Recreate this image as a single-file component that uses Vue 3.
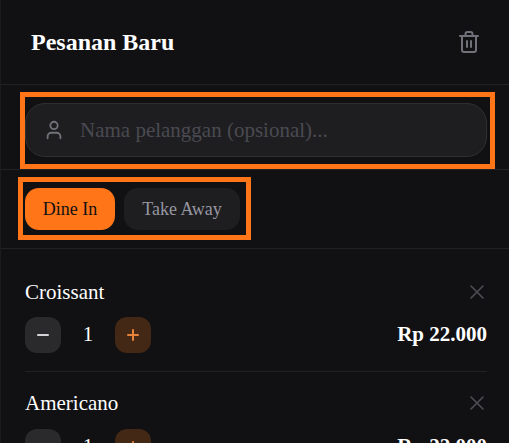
<script setup>
const items = [
  { name: 'Croissant', qty: 1, price: 'Rp 22.000' },
  { name: 'Americano', qty: 1, price: 'Rp 22.000' },
]
</script>

<template>
  <div class="panel">
    <header class="head">
      <h1 class="title">Pesanan Baru</h1>
      <button class="trash" aria-label="Hapus">
        <svg width="24" height="24" viewBox="0 0 24 24" fill="none" stroke="currentColor" stroke-width="2" stroke-linecap="round" stroke-linejoin="round">
          <path d="M3 6h18" />
          <path d="M8.5 6V4a2 2 0 0 1 2-2h3a2 2 0 0 1 2 2v2" />
          <path d="M19 6v14a2 2 0 0 1-2 2H7a2 2 0 0 1-2-2V6" />
          <path d="M10 11v6" />
          <path d="M14 11v6" />
        </svg>
      </button>
    </header>

    <section class="customer">
      <div class="mark mark-input">
        <div class="field">
          <svg class="user" width="22" height="22" viewBox="0 0 24 24" fill="none" stroke="currentColor" stroke-width="2" stroke-linecap="round" stroke-linejoin="round">
            <circle cx="12" cy="7" r="4" />
            <path d="M5 21v-2a4 4 0 0 1 4-4h6a4 4 0 0 1 4 4v2" />
          </svg>
          <span class="placeholder">Nama pelanggan (opsional)...</span>
        </div>
      </div>
    </section>

    <section class="mode">
      <div class="mark mark-tabs">
        <button class="tab active">Dine In</button>
        <button class="tab">Take Away</button>
      </div>
    </section>

    <section class="list">
      <article v-for="item in items" :key="item.name" class="item">
        <div class="row">
          <span class="name">{{ item.name }}</span>
          <svg class="remove" width="18" height="18" viewBox="0 0 18 18" fill="none" stroke="currentColor" stroke-width="1.6" stroke-linecap="round">
            <path d="M3 3l12 12M15 3L3 15" />
          </svg>
        </div>
        <div class="row qty-row">
          <div class="qty">
            <button class="step minus">
              <svg width="16" height="16" viewBox="0 0 16 16" fill="none" stroke="currentColor" stroke-width="2" stroke-linecap="round"><path d="M3 8h10" /></svg>
            </button>
            <span class="count">{{ item.qty }}</span>
            <button class="step plus">
              <svg width="16" height="16" viewBox="0 0 16 16" fill="none" stroke="currentColor" stroke-width="2" stroke-linecap="round"><path d="M3 8h10M8 3v10" /></svg>
            </button>
          </div>
          <span class="price">{{ item.price }}</span>
        </div>
      </article>
    </section>
  </div>
</template>

<style>
html, body { margin: 0; background: #111113; overflow: hidden; }
</style>

<style scoped>
.panel {
  height: 443px;
  overflow: hidden;
  box-sizing: border-box;
  background: #111113;
  border-left: 1px solid #1b1b1d;
  font-family: "Liberation Serif", serif;
  color: #fff;
}
.head {
  height: 84px;
  display: flex;
  align-items: center;
  justify-content: space-between;
  padding: 0 28px 0 30px;
  border-bottom: 1px solid #222224;
}
.title { margin: 0; font-size: 24px; font-weight: 700; }
.trash { background: none; border: 0; padding: 0; color: #71717a; display: flex; }
.customer {
  height: 85px;
  box-sizing: border-box;
  padding-top: 12px;
  border-bottom: 1px solid #222224;
}
.mark { outline: 5px solid #ff7518; box-sizing: border-box; }
.mark-input {
  margin-left: 24px;
  width: 465px;
  height: 67px;
  padding: 6px 3px 7px 0;
}
.field {
  height: 54px;
  box-sizing: border-box;
  display: flex;
  align-items: center;
  gap: 15px;
  padding: 0 17px;
  background: #1e1e20;
  border: 1px solid #303032;
  border-radius: 20px;
}
.user { color: #71717a; flex: none; }
.placeholder { font-size: 21px; color: #4a4a52; }
.mode {
  height: 79px;
  box-sizing: border-box;
  padding-top: 12px;
  border-bottom: 1px solid #222224;
}
.mark-tabs {
  margin-left: 22px;
  width: 223px;
  height: 53px;
  display: flex;
  gap: 9px;
  padding: 6px 6px 5px 2px;
}
.tab {
  height: 42px;
  border: 0;
  border-radius: 14px;
  background: #1e1e20;
  color: #9696a0;
  font: 18px "Liberation Serif", serif;
  padding: 0;
  width: 116px;
}
.tab.active { background: #ff7518; color: #111113; width: 90px; }
.list { padding: 11.4px 22px 0 24px; }
.item { padding: 16.2px 0 18px; border-bottom: 1px solid #222224; }
.row { display: flex; align-items: center; justify-content: space-between; }
.name { font-size: 21px; line-height: 30px; }
.remove { color: #4e4e54; margin-right: 1.5px; }
.qty-row { margin-top: 10.4px; }
.qty { display: flex; align-items: center; }
.step {
  width: 36px;
  height: 36px;
  border: 0;
  border-radius: 12px;
  padding: 0;
  display: flex;
  align-items: center;
  justify-content: center;
}
.minus { background: #2a2a2c; color: #d4d4d8; }
.plus { background: #432815; color: #e5833a; }
.count { width: 54px; text-align: center; font-size: 21px; }
.price { font-size: 21px; font-weight: 700; }
</style>
